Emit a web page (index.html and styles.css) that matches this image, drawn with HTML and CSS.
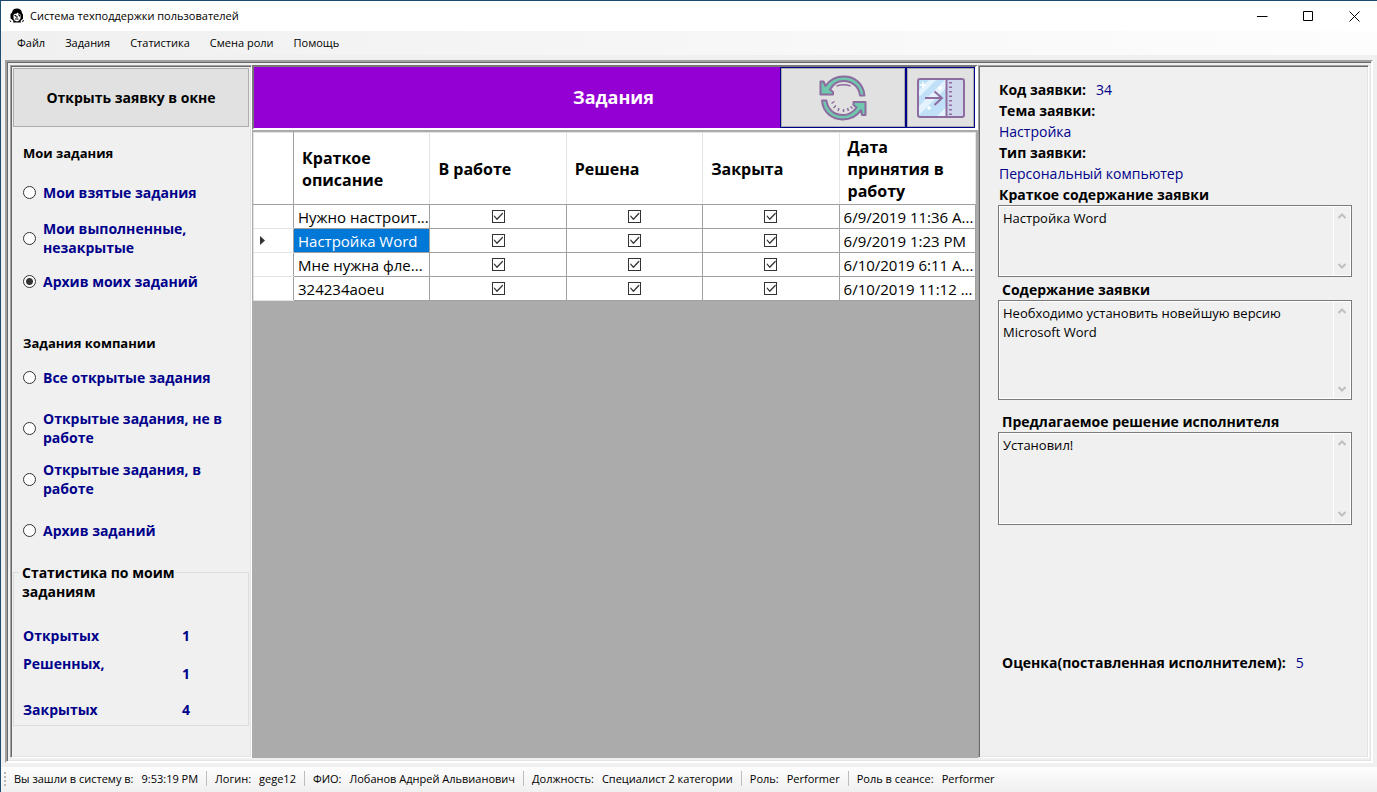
FILE: index.html
```html
<!DOCTYPE html>
<html lang="ru">
<head>
<meta charset="utf-8">
<title>Система техподдержки пользователей</title>
<link rel="stylesheet" href="styles.css">
</head>
<body>
<div class="window">
  <header class="titlebar">
    <svg class="app-icon" viewBox="0 0 16 16" aria-hidden="true">
      <path d="M3 4.500Q3.500 .5 8 .5T13 5l1 1.500v4.500l-1 .5-1.500 1.500.5 1.500H4l.5-1.500L3 11.500l-1.500-1V6z" fill="#000"/>
      <path d="M4.500 7 6 5.500l1 .5 1.500-1.500L10 6l1.500.5v4L10 12.500l-2 1-2.500-1-1-2z" fill="#fff"/>
      <path d="M5.500 7.500h1.500v1.500M9 7h1.500v1.500M8 8v2M6 11h3.500M1 12.500l1 1.500M14.500 12l-1 2" fill="none" stroke="#000"/>
    </svg>
    <h1 class="window-title">Система техподдержки пользователей</h1>
    <div class="window-buttons">
      <button class="window-button" type="button" aria-label="Свернуть"><svg viewBox="0 0 11 11"><path d="M0 5.500h10.500"/></svg></button>
      <button class="window-button" type="button" aria-label="Развернуть"><svg viewBox="0 0 11 11"><path d="M.5.5h9v9h-9z"/></svg></button>
      <button class="window-button" type="button" aria-label="Закрыть"><svg viewBox="0 0 11 11"><path d="m.5.5 10 10m0-10-10 10"/></svg></button>
    </div>
  </header>
  <nav class="menubar">
    <button type="button">Файл</button>
    <button type="button">Задания</button>
    <button type="button">Статистика</button>
    <button type="button">Смена роли</button>
    <button type="button">Помощь</button>
  </nav>
  <main class="workspace">
    <section class="panel filters">
      <button class="open-button" type="button">Открыть заявку в окне</button>
      <div class="filter-group" role="radiogroup" aria-labelledby="mine">
        <h2 id="mine">Мои задания</h2>
        <label class="option"><input type="radio" name="filter"><span>Мои взятые задания</span></label>
        <label class="option tall"><input type="radio" name="filter"><span>Мои выполненные, незакрытые</span></label>
        <label class="option"><input type="radio" name="filter" checked><span>Архив моих заданий</span></label>
      </div>
      <div class="filter-group company" role="radiogroup" aria-labelledby="company">
        <h2 id="company">Задания компании</h2>
        <label class="option"><input type="radio" name="filter"><span>Все открытые задания</span></label>
        <label class="option tall"><input type="radio" name="filter"><span>Открытые задания, не в работе</span></label>
        <label class="option tall"><input type="radio" name="filter"><span>Открытые задания, в работе</span></label>
        <label class="option"><input type="radio" name="filter"><span>Архив заданий</span></label>
      </div>
      <fieldset class="stats">
        <legend>Статистика по моим заданиям</legend>
        <dl>
          <dt>Открытых</dt><dd>1</dd>
          <dt class="solved">Решенных,</dt><dd>1</dd>
          <dt>Закрытых</dt><dd>4</dd>
        </dl>
      </fieldset>
    </section>

    <section class="tasks">
      <div class="tasks-bar">
        <h2>Задания</h2>
        <button class="tool-button refresh" type="button" aria-label="Обновить">
          <svg viewBox="0 0 48 46" aria-hidden="true">
            <g fill="#6fc7ae" stroke="#8d6c9f" stroke-width="2" stroke-linejoin="round">
              <path d="M1.500 6.500v13h12.500v-2.500l-3-2.500C14 9 19 6 24.500 6c9 0 15.500 6 16.500 14.500h4.500C44.500 9 36 1.500 25 1.500c-8 0-14.500 3.500-18.500 9.500L4.500 6.500z"/>
              <path d="M46.500 40V27H34.500v3l3 2.500C34 37.500 29.500 40 24 40 15 40 8.500 34 7.500 25.500H3C4 37 12.500 44.500 23.500 44.500c8 0 14.500-3.500 18.500-9.500l1 5z"/>
            </g>
            <path d="M17.500 11q7-2.500 14 0M12.500 28.500l3-2M14.500 33l2.500-2.500M19 36l1-3M24.500 37v-3M29.500 36l-1-3M33.500 33.500l-2-2" fill="none" stroke="#8d6c9f" stroke-width="1.500"/>
          </svg>
        </button>
        <button class="tool-button collapse" type="button" aria-label="Скрыть панель">
          <svg viewBox="0 0 48 40" aria-hidden="true">
            <rect x="1" y="1" width="46" height="38" rx="2" fill="#ced7eb"/>
            <path d="M1 1h28v38H1z" fill="#bfe0f7"/>
            <path d="M1 29 29 1v9L1 38zM1 20 20 1h-7L1 13zM19 39 29 29v10z" fill="#e3f2fd"/>
            <path d="M6 4v6M3 7h6M23 8v4M21 10h4M12 28v4M10 30h4" stroke="#fff" stroke-width="1.500"/>
            <rect x="1" y="1" width="46" height="38" rx="2" fill="none" stroke="#8d6c9f" stroke-width="2"/>
            <path d="M29.500 1v38M8 20h17M17.500 13.500l7.500 6.500-7.500 7" fill="none" stroke="#8d6c9f" stroke-width="2"/>
            <path d="M33.500 4v33" stroke="#8d6c9f" stroke-width="3" stroke-dasharray="1.500 3"/>
          </svg>
        </button>
      </div>
      <div class="grid-area">
        <table class="grid">
          <colgroup><col class="marker-col"><col><col><col><col><col></colgroup>
          <thead>
            <tr><th></th><th>Краткое описание</th><th>В работе</th><th>Решена</th><th>Закрыта</th><th>Дата принятия в работу</th></tr>
          </thead>
          <tbody>
            <tr><td class="marker"></td><td>Нужно настроит...</td><td class="check"><input type="checkbox" aria-label="В работе" checked></td><td class="check"><input type="checkbox" aria-label="Решена" checked></td><td class="check"><input type="checkbox" aria-label="Закрыта" checked></td><td>6/9/2019 11:36 A...</td></tr>
            <tr><td class="marker current"></td><td class="selected">Настройка Word</td><td class="check"><input type="checkbox" aria-label="В работе" checked></td><td class="check"><input type="checkbox" aria-label="Решена" checked></td><td class="check"><input type="checkbox" aria-label="Закрыта" checked></td><td>6/9/2019 1:23 PM</td></tr>
            <tr><td class="marker"></td><td>Мне нужна фле...</td><td class="check"><input type="checkbox" aria-label="В работе" checked></td><td class="check"><input type="checkbox" aria-label="Решена" checked></td><td class="check"><input type="checkbox" aria-label="Закрыта" checked></td><td>6/10/2019 6:11 A...</td></tr>
            <tr><td class="marker"></td><td>324234aoeu</td><td class="check"><input type="checkbox" aria-label="В работе" checked></td><td class="check"><input type="checkbox" aria-label="Решена" checked></td><td class="check"><input type="checkbox" aria-label="Закрыта" checked></td><td>6/10/2019 11:12 ...</td></tr>
          </tbody>
        </table>
      </div>
    </section>

    <section class="panel details">
      <dl class="facts">
        <div class="fact-row"><dt>Код заявки:</dt><dd>34</dd></div>
        <dt>Тема заявки:</dt><dd>Настройка</dd>
        <dt>Тип заявки:</dt><dd>Персональный компьютер</dd>
      </dl>
      <label class="field-label first" for="brief">Краткое содержание заявки</label>
      <div class="memo brief">
        <textarea id="brief" readonly>Настройка Word</textarea>
        <div class="scroll"><svg viewBox="0 0 8 6"><path d="M.5 5 4 1.500 7.500 5"/></svg><svg viewBox="0 0 8 6"><path d="M.5 1 4 4.500 7.500 1"/></svg></div>
      </div>
      <label class="field-label" for="content">Содержание заявки</label>
      <div class="memo content">
        <textarea id="content" readonly>Необходимо установить новейшую версию Microsoft Word</textarea>
        <div class="scroll"><svg viewBox="0 0 8 6"><path d="M.5 5 4 1.500 7.500 5"/></svg><svg viewBox="0 0 8 6"><path d="M.5 1 4 4.500 7.500 1"/></svg></div>
      </div>
      <label class="field-label spaced" for="solution">Предлагаемое решение исполнителя</label>
      <div class="memo solution">
        <textarea id="solution" readonly>Установил!</textarea>
        <div class="scroll"><svg viewBox="0 0 8 6"><path d="M.5 5 4 1.500 7.500 5"/></svg><svg viewBox="0 0 8 6"><path d="M.5 1 4 4.500 7.500 1"/></svg></div>
      </div>
      <dl class="rating"><dt>Оценка(поставленная исполнителем):</dt><dd>5</dd></dl>
    </section>
  </main>
  <footer class="statusbar">
    <span class="grip" aria-hidden="true"></span>
    <p><span>Вы зашли в систему в:</span><span>9:53:19 PM</span></p>
    <p><span>Логин:</span><span>gege12</span></p>
    <p><span>ФИО:</span><span>Лобанов Аднрей Альвианович</span></p>
    <p><span>Должность:</span><span>Специалист 2 категории</span></p>
    <p><span>Роль:</span><span>Performer</span></p>
    <p><span>Роль в сеансе:</span><span>Performer</span></p>
  </footer>
</div>
</body>
</html>
```
FILE: styles.css
```css
* { box-sizing: border-box; }
body {
  margin: 0;
  font-family: "Open Sans", "Noto Sans", sans-serif;
  font-size: 14px;
  line-height: 19px;
  color: #000;
  background: #f0f0f0;
}
h1, h2, p, dl, dd { margin: 0; }
button { font: inherit; color: inherit; }
.window {
  display: flex;
  flex-direction: column;
  min-height: 100vh;
  border-top: 1px solid #1b4770;
  border-left: 1px solid #1b4f72;
}

.titlebar {
  display: flex;
  align-items: center;
  height: 30px;
  padding-left: 8px;
  background: #fff;
}
.app-icon { width: 16px; height: 16px; margin-right: 5px; }
.window-title { padding-bottom: 2px; font-size: 11px; font-weight: 400; }
.window-buttons { display: flex; margin-left: auto; }
.window-button {
  display: grid;
  place-items: center;
  width: 46px;
  height: 30px;
  padding: 0;
  border: 0;
  background: none;
}
.window-button svg { width: 11px; height: 11px; fill: none; stroke: #000; }

.menubar {
  display: flex;
  height: 24px;
  padding-left: 6px;
  background: linear-gradient(90deg, #f0f0f0, #fdfdfd);
}
.menubar button {
  padding: 0 10px 2px;
  border: 0;
  background: none;
  font-size: 11px;
}

.workspace {
  flex: 1;
  display: grid;
  grid-template-columns: 242px 1fr 391px;
  margin: 5px 4px 4px;
  padding: 3px 2px 3px 3px;
  border: 2px solid;
  border-color: #a0a0a0 #fff #fff #a0a0a0;
  box-shadow: inset 1px 1px #696969, inset -1px -1px #e3e3e3;
}
.panel {
  border: 1px solid;
  border-color: #a0a0a0 #fff #fff #a0a0a0;
  box-shadow: inset 1px 1px #696969, inset -1px -1px #e3e3e3;
}

.filters { padding: 2px; font-weight: 700; }
.open-button {
  display: block;
  width: 236px;
  height: 59px;
  border: 1px solid #adadad;
  background: #e1e1e1;
  font-weight: 700;
}
.filter-group { padding: 16px 0 0 10px; color: #00008b; }
.filter-group h2 {
  margin-bottom: 20px;
  font-size: 13px;
  line-height: 20px;
  color: #000;
}
.filter-group.company { padding-top: 42px; }
.filter-group.company h2 { margin-bottom: 15px; }
.option {
  display: flex;
  align-items: center;
  gap: 7px;
  min-height: 19px;
}
.option span { max-width: 190px; }
.option.tall { margin: 17px 0 15px; }
.company .option.tall { margin: 22px 0 13px; }
.company .option.tall + .option.tall { margin: 13px 0 23px; }
.option input {
  appearance: none;
  flex: none;
  width: 13px;
  height: 13px;
  margin: 0;
  border: 1px solid #333;
  border-radius: 50%;
  background: #fff;
}
.option input:checked { background: radial-gradient(circle, #333 3px, #fff 4px); }

.stats {
  margin: 23px 0 0;
  padding: 0 0 7px 9px;
  border: 1px solid #dcdcdc;
}
.stats legend {
  width: 156px;
  height: 19px;
  margin-left: -4px;
  padding: 0 0 0 3px;
}
.stats dl {
  display: grid;
  grid-template-columns: 159px 1fr;
  align-items: center;
  grid-template-rows: 20px 56px 17px;
  padding-top: 43px;
  color: #00008b;
}
.stats dt.solved { align-self: start; padding-top: 9px; }

.tasks {
  display: flex;
  flex-direction: column;
  background: #ababab;
}
.tasks-bar {
  display: flex;
  height: 65px;
  border: 2px solid;
  border-color: #777 #fff #fff #777;
  border-right-width: 3px;
  background: #9400d3;
}
.tasks-bar h2 {
  flex: 1;
  padding: 0 0 2px 193px;
  align-self: center;
  text-align: center;
  font-size: 18px;
  line-height: 24px;
  color: #fff;
}
.tool-button {
  display: grid;
  place-items: center;
  height: 61px;
  padding: 0;
  border: 1px solid #00008b;
  box-shadow: inset 0 0 0 1px #adadad;
  background: #e1e1e1;
}
.refresh { width: 126px; }
.refresh svg { width: 48px; height: 46px; }
.collapse { width: 69px; }
.collapse svg { width: 48px; height: 40px; }
.grid-area { flex: 1; padding: 2px 2px 0 1px; }
.grid {
  width: 100%;
  table-layout: fixed;
  border-collapse: collapse;
  background: #fff;
  font-size: 15px;
}
.marker-col { width: 40px; }
.grid th {
  height: 72px;
  padding: 0 8px;
  border: 1px solid #e3e3e3;
  border-bottom-color: #a0a0a0;
  font-size: 16px;
  line-height: 22px;
  text-align: left;
}
.grid th:first-child { border-right-color: #a0a0a0; }
.grid td {
  height: 24px;
  padding: 0 0 0 4px;
  border: 1px solid #a0a0a0;
  line-height: 20px;
  white-space: nowrap;
}
.grid td.marker { border-color: #e3e3e3 #a0a0a0 #e3e3e3 #e3e3e3; }
.marker.current::before {
  content: "";
  display: block;
  width: 5px;
  height: 9px;
  margin-left: 2px;
  background: #333;
  clip-path: polygon(0 0, 100% 50%, 0 100%);
}
.grid td.selected { background: #0078d7; color: #fff; }
.grid td.check { padding: 0; text-align: center; }
.check input {
  appearance: none;
  display: block;
  width: 13px;
  height: 13px;
  margin: 0 auto;
  border: 1px solid #333;
  background: #fff;
}
.check input:checked::before {
  content: "";
  display: block;
  width: 11px;
  height: 11px;
  background: #333;
  clip-path: polygon(9% 46%, 18% 42%, 40% 66%, 90% 14%, 96% 24%, 40% 84%);
}

.details { padding: 13px 16px 0 19px; }
.facts, .field-label, .rating { line-height: 21px; }
.facts { padding-left: 1px; }
.facts dt, .rating dt, .field-label { font-weight: 700; }
.facts dd, .rating dd { color: #00008b; }
.fact-row, .rating { display: flex; gap: 10px; }
.field-label { display: block; padding: 2px 0 0 4px; }
.field-label.first { padding: 0 0 0 1px; }
.field-label.spaced { padding-top: 11px; }
.memo {
  position: relative;
  border: 1px solid #7a7a7a;
}
.memo textarea {
  display: block;
  width: 100%;
  height: 100%;
  padding: 2px 20px 0 3px;
  border: 1px solid #fff;
  outline: 0;
  resize: none;
  overflow: hidden;
  background: #f0f0f0;
  font: inherit;
  font-size: 13px;
  line-height: 19px;
  color: #000;
}
.brief { height: 72px; }
.content { height: 100px; }
.solution { height: 93px; }
.scroll {
  position: absolute;
  inset: 1px 1px 1px auto;
  display: flex;
  flex-direction: column;
  justify-content: space-between;
  align-items: center;
  width: 17px;
  padding: 6px 0;
  border-left: 1px solid #fff;
}
.scroll svg { width: 8px; height: 6px; fill: none; stroke: #bfbfbf; stroke-width: 2; }
.rating { padding: 127px 0 0 4px; gap: 10px; }

.statusbar {
  display: flex;
  align-items: center;
  height: 25px;
  padding-bottom: 2px;
  background: linear-gradient(#fdfdfd, #f0f0f0);
  font-size: 11px;
  white-space: nowrap;
}
.grip {
  width: 2px;
  height: 14px;
  margin-left: 3px;
  background: repeating-linear-gradient(#b8b8b8 0 2px, transparent 2px 4px);
}
.statusbar p {
  display: flex;
  gap: 8px;
  padding: 0 8px;
  line-height: 15px;
}
.statusbar p + p { border-left: 1px solid #bdbdbd; }
```
